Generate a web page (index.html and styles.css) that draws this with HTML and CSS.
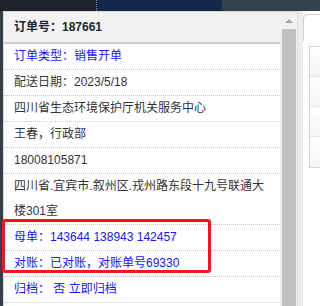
FILE: index.html
```html
<!DOCTYPE html>
<html lang="zh-CN">
<head>
    <meta charset="UTF-8">
    <meta name="viewport" content="width=device-width, initial-scale=1.0">
    <title>订单详情</title>
    <link rel="stylesheet" href="styles.css">
</head>
<body>
    <div class="topbar">
        <div class="seg seg-dark"></div>
        <div class="seg seg-navy"></div>
        <div class="seg seg-slate"></div>
    </div>
    <div class="workspace">
        <div class="gutter"></div>
        <div class="popup">
            <div class="order">
                <div class="order-head">订单号：187661</div>
                <ul class="order-info">
                    <li class="link">订单类型：销售开单</li>
                    <li>配送日期：2023/5/18</li>
                    <li>四川省生态环境保护厅机关服务中心</li>
                    <li>王春，行政部</li>
                    <li>18008105871</li>
                    <li>四川省.宜宾市.叙州区.戎州路东段十九号联通大楼301室</li>
                    <li class="link">母单：143644 138943 142457</li>
                    <li class="link">对账：已对账，对账单号69330</li>
                    <li class="link">归档：&nbsp;否 立即归档</li>
                    <li></li>
                </ul>
            </div>
            <div class="scrollbar">
                <div class="scroll-up"><span class="arrow"></span></div>
                <div class="scroll-thumb"></div>
            </div>
        </div>
        <div class="side">
            <div class="side-rail"></div>
            <div class="side-panel">
                <div class="side-tab"></div>
                <div class="side-table">
                    <div class="side-row"></div>
                    <div class="side-row"></div>
                    <div class="side-row"></div>
                    <div class="side-row"></div>
                </div>
            </div>
        </div>
        <!-- highlight drawn over the parent / reconcile rows -->
        <div class="mark"></div>
    </div>
</body>
</html>
```

FILE: styles.css
```css
* {
    margin: 0;
    padding: 0;
    box-sizing: border-box;
}
body {
    width: 320px;
    height: 306px;
    overflow: hidden;
    background: #fff;
    font-family: "Liberation Sans", "Noto Sans CJK SC", sans-serif;
    font-size: 12px;
    color: #333;
}
.topbar {
    display: flex;
    height: 11px;
}
.seg-dark {
    width: 97px;
    background: #1f232c;
    border-right: 1px dotted #8a8f99;
}
.seg-navy {
    width: 125px;
    background: #152849;
}
.seg-slate {
    flex: 1;
    background: #36414e;
}
.workspace {
    position: relative;
    display: flex;
    height: 295px;
}
.gutter {
    width: 3px;
    background: #353d48;
}
.popup {
    display: flex;
    width: 294px;
    border-left: 1px solid #dcdcdc;
    border-top: 1px solid #d6d6d6;
}
.order {
    flex: 1;
    overflow: hidden;
}
.order-head {
    height: 32px;
    padding: 0 10px;
    line-height: 30px;
    background: #f2f2f2;
    border-bottom: 2px solid #cccccc;
    font-weight: bold;
    color: #1d2433;
}
.order-info {
    list-style: none;
}
.order-info li {
    padding: 0 10px;
    line-height: 25px;
    min-height: 26px;
    border-bottom: 1px dotted #c4c4c4;
    width: 276px;
}
.order-info .link {
    color: #1414ff;
}
.scrollbar {
    width: 17px;
    display: flex;
    flex-direction: column;
    background: #f1f1f1;
}
.scroll-up {
    height: 17px;
    display: flex;
    align-items: center;
    justify-content: center;
}
.arrow {
    width: 0;
    height: 0;
    border-left: 4px solid transparent;
    border-right: 4px solid transparent;
    border-bottom: 4px solid #a3a3a3;
}
.scroll-thumb {
    flex: 1;
    margin: 0 1px 0 2px;
    background: #c1c1c1;
}
.side {
    flex: 1;
    display: flex;
}
.side-rail {
    width: 6px;
    background: #ececec;
    border-left: 1px solid #dedede;
}
.side-panel {
    flex: 1;
    padding-top: 3px;
}
.side-tab {
    height: 27px;
    border-top: 1px solid #cfcfcf;
    border-left: 1px solid #cfcfcf;
    border-top-left-radius: 5px;
}
.side-table {
    margin: 5px 0 0 6px;
    border: 1px solid #d4d4d4;
    border-right: none;
}
.side-row {
    height: 30px;
    background: linear-gradient(#fff, #f4f4f4);
    border-bottom: 1px solid #e2e2e2;
}
.side-row:last-child {
    border-bottom: none;
}
.mark {
    position: absolute;
    left: 2px;
    top: 208px;
    width: 209px;
    height: 54px;
    border: 3px solid #f4161c;
    border-radius: 3px;
}
```
